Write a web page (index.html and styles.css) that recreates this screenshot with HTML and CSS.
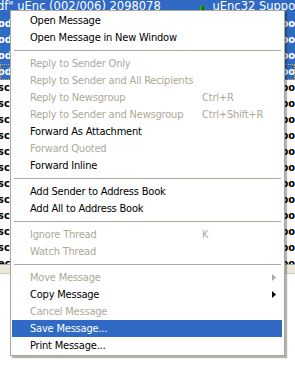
FILE: index.html
```html
<!DOCTYPE html>
<html lang="en">
<head>
  <meta charset="UTF-8">
  <title>Message context menu</title>
  <link rel="stylesheet" href="styles.css">
</head>
<body>
  <!-- message list behind the menu -->
  <div class="list">
    <div class="row sel first">
      <span class="subj">df" uEnc (002/006) 2098078</span>
      <span class="att"><svg width="8" height="8" viewBox="0 0 8 8"><path d="M1 5 L3 1 L6 2 L7 6 L4 7 Z" fill="#22b022"/><path d="M4 2 L6 3 L6 6 L4 6 Z" fill="#0a5a0a"/></svg></span>
      <span class="from">uEnc32 Suppo</span>
    </div>
    <div class="row sel"><span class="c1">od</span><span class="c2">oo</span></div>
    <div class="row sel"><span class="c1">od</span><span class="c2">oo</span></div>
    <div class="row sel"><span class="c1">od</span><span class="c2">oo</span></div>
    <div class="row sel focus"><span class="c1">od</span><span class="c2">oo</span></div>
    <div class="row"><span class="c1">sc</span><span class="c2">oo</span></div>
    <div class="row"><span class="c1">sc</span><span class="c2">oo</span></div>
    <div class="row"><span class="c1">sc</span><span class="c2">oo</span></div>
    <div class="row"><span class="c1">sc</span><span class="c2">oo</span></div>
    <div class="row"><span class="c1">sc</span><span class="c2">oo</span></div>
    <div class="row"><span class="c1">sc</span><span class="c2">oo</span></div>
    <div class="row"><span class="c1">sc</span><span class="c2">oo</span></div>
    <div class="row"><span class="c1">sc</span><span class="c2">oo</span></div>
    <div class="row"><span class="c1">sc</span><span class="c2">oo</span></div>
    <div class="row"><span class="c1">sc</span><span class="c2">oo</span></div>
    <div class="row"><span class="c1">sc</span><span class="c2">oo</span></div>
    <div class="row"><span class="c1">ec</span><span class="c2">oo</span></div>
  </div>
  <div class="splitter"></div>
  <div class="preview"></div>

  <!-- context menu -->
  <ul class="menu">
    <li class="item">Open Message</li>
    <li class="item">Open Message in New Window</li>
    <li class="sep"></li>
    <li class="item off">Reply to Sender Only</li>
    <li class="item off">Reply to Sender and All Recipients</li>
    <li class="item off"><span class="label">Reply to Newsgroup</span><span class="key">Ctrl+R</span></li>
    <li class="item off"><span class="label">Reply to Sender and Newsgroup</span><span class="key">Ctrl+Shift+R</span></li>
    <li class="item">Forward As Attachment</li>
    <li class="item off">Forward Quoted</li>
    <li class="item">Forward Inline</li>
    <li class="sep"></li>
    <li class="item">Add Sender to Address Book</li>
    <li class="item">Add All to Address Book</li>
    <li class="sep"></li>
    <li class="item off"><span class="label">Ignore Thread</span><span class="key">K</span></li>
    <li class="item off">Watch Thread</li>
    <li class="sep"></li>
    <li class="item off"><span class="label">Move Message</span><svg class="arrow" width="4" height="7" viewBox="0 0 4 7"><polygon points="0,0 4,3.5 0,7"/></svg></li>
    <li class="item"><span class="label">Copy Message</span><svg class="arrow" width="4" height="7" viewBox="0 0 4 7"><polygon points="0,0 4,3.5 0,7"/></svg></li>
    <li class="item off">Cancel Message</li>
    <li class="item hot">Save Message...</li>
    <li class="item">Print Message...</li>
  </ul>
</body>
</html>
```

FILE: styles.css
```css
* { margin: 0; padding: 0; box-sizing: border-box; }
body {
  width: 295px;
  height: 366px;
  overflow: hidden;
  background: #fff;
  font-family: "DejaVu Sans Condensed", "Liberation Sans", sans-serif;
  font-size: 11px;
}

/* list */
.list {
  height: 264px;
  overflow: hidden;
  background: #fff;
}
.row {
  display: flex;
  height: 16px;
  line-height: 16px;
  font-weight: bold;
  color: #000;
  white-space: nowrap;
}
.row.sel { background: #316ac5; color: #fff; }
.row.focus { outline: 1px dotted #d8b040; outline-offset: -1px; }
.row.first {
  line-height: 12px;
  font-family: "DejaVu Sans", sans-serif;
  font-size: 11.5px;
  font-weight: normal;
}
.c1 {
  width: 284px;
  overflow: hidden;
  text-indent: -2px;
}
.c2 { overflow: hidden; }

.subj { width: 198px; overflow: hidden; text-indent: -3px; }
.att { width: 15px; padding-top: 2px; }
.from { overflow: hidden; }

.splitter {
  height: 10px;
  background: #ece9d8;
  border-top: 1px solid #aca899;
  border-bottom: 1px solid #d0ccbc;
}
.preview { height: 92px; background: #fff; }

/* menu */
.menu {
  position: absolute;
  left: 10px;
  top: 10px;
  width: 275px;
  list-style: none;
  background: #fff;
  border: 1px solid #aca899;
  padding: 1px 2px 1px 1px;
  box-shadow: 2px 2px 1px rgba(0,0,0,0.3);
  letter-spacing: -0.2px;
}
.item {
  display: flex;
  align-items: center;
  height: 17px;
  padding-left: 18px;
  padding-right: 6px;
  color: #000;
  white-space: nowrap;
}
.item.off { color: #aca899; }
.item.hot { background: #316ac5; color: #fff; }
.label { width: 172px; }
.key { color: inherit; }
.arrow { margin-left: auto; fill: #000; }
.item.off .arrow { fill: #aca899; }
.sep {
  height: 9px;
  padding-top: 4px;
  margin: 0 1px 0 2px;
}
.sep::after {
  content: "";
  display: block;
  height: 1px;
  background: #aca899;
}
```
